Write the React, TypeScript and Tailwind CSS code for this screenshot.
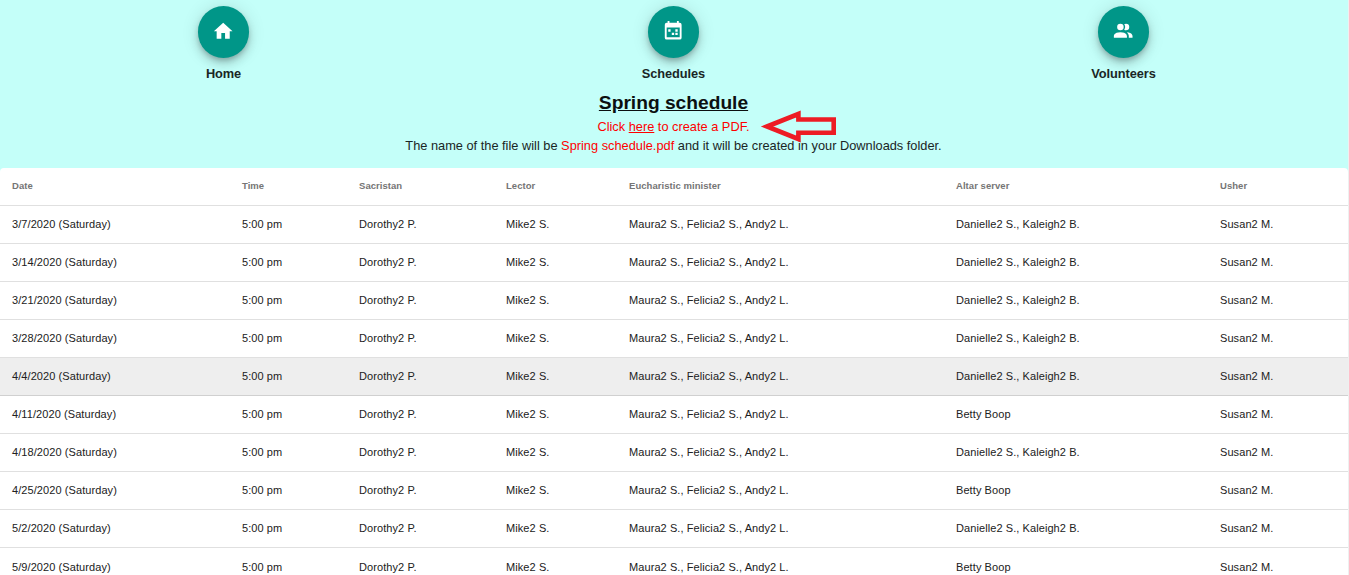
import type { ReactNode } from "react";

const altar = "Danielle2 S., Kaleigh2 B.";
const betty = "Betty Boop";
const rows = [
  ["3/7/2020", altar],
  ["3/14/2020", altar],
  ["3/21/2020", altar],
  ["3/28/2020", altar],
  ["4/4/2020", altar],
  ["4/11/2020", betty],
  ["4/18/2020", altar],
  ["4/25/2020", betty],
  ["5/2/2020", altar],
  ["5/9/2020", betty],
];
const headings = ["Date", "Time", "Sacristan", "Lector", "Eucharistic minister", "Altar server", "Usher"];

function Icon({ d }: { d: string }) {
  return (
    <svg viewBox="0 0 24 24" className="-mt-px size-[22.4px]" fill="currentColor">
      <path fillRule="evenodd" d={d} />
    </svg>
  );
}

const homePath = "M10 20v-6h4v6h5v-8h3L12 3 2 12h3v8z";
const calendarPath =
  "M19 3A2 2 0 0 1 21 5V19A2 2 0 0 1 19 21H5A2 2 0 0 1 3 19V5A2 2 0 0 1 5 3H6V1H8V3H16V1H18V3zM5 8V18.500H19V8zM6.700 10H9.200V12.500H6.700zM14.300 10H16.800V12.500H14.300zM10.500 13.700H13V16.200H10.500zM14.300 13.700H16.800V16.200H14.300z";
const peoplePath =
  "M16 17V19H2V17S2 13 9 13 16 17 16 17M12.500 7.500A3.500 3.500 0 1 0 9 11A3.500 3.500 0 0 0 12.500 7.500M15.940 13A5.320 5.320 0 0 1 18 17V19H22V17S22 13.370 15.940 13M15 4A3.390 3.390 0 0 0 13.070 4.590A5 5 0 0 1 13.070 10.410A3.390 3.390 0 0 0 15 11A3.500 3.500 0 0 0 15 4Z";

function NavItem({ label, children }: { label: string; children: ReactNode }) {
  return (
    <div className="flex flex-1 flex-col items-center pt-[6.4px]">
      <button className="flex size-[51.2px] items-center justify-center rounded-full bg-[#009688] text-white shadow-[0_3px_5px_-1px_rgba(0,0,0,0.2),0_6px_10px_0_rgba(0,0,0,0.14),0_1px_18px_0_rgba(0,0,0,0.12)]">
        {children}
      </button>
      <span className="mt-1.5 text-[12.8px] leading-[19px] font-bold tracking-[-0.08px] text-[#1a2625]">{label}</span>
    </div>
  );
}

export default function App() {
  return (
    <div className="h-[575px] overflow-hidden border-r border-[#eef0f0] bg-[#c4fff9] font-['Liberation_Sans',Arial,sans-serif] text-[#1a2625]">
      <header className="h-[168px]">
        <nav className="-ml-[1.5px] flex h-[90px] w-[1350px]">
          <NavItem label="Home"><Icon d={homePath} /></NavItem>
          <NavItem label="Schedules"><Icon d={calendarPath} /></NavItem>
          <NavItem label="Volunteers"><Icon d={peoplePath} /></NavItem>
        </nav>
        <div className="relative w-[1347px] text-center text-[12.8px] leading-[19px]">
          <h1 className="h-[27px] text-[19.2px] leading-[25px] font-bold text-[#0c1010] underline">Spring schedule</h1>
          <p className="text-[#ff0000]">Click <a href="#pdf" className="underline">here</a> to create a PDF.</p>
          <p>The name of the file will be <span className="text-[#ff0000]">Spring schedule.pdf</span> and it will be created in your Downloads folder.</p>
          <svg className="absolute top-[20px] left-[760px] h-[34px] w-[78px]" viewBox="0 0 78 34" fill="none">
            <path d="M7 16.500L38.400 4v5.500h35.300v13.200H38.400V29z" stroke="#ed1c24" strokeWidth="4.600" />
          </svg>
        </div>
      </header>
      <table className="w-[1348px] table-fixed border-separate border-spacing-0 rounded-t bg-white text-left">
        <colgroup>
          <col className="w-[230px]" /><col className="w-[117px]" /><col className="w-[147px]" /><col className="w-[123px]" />
          <col className="w-[327px]" /><col className="w-[264px]" /><col className="w-[140px]" />
        </colgroup>
        <thead>
          <tr>
            {headings.map((h) => (
              <th key={h} className="h-[38px] border-b border-[#e0e0e0] py-0 pl-3 text-[9.500px] font-bold tracking-[0.05px] text-[#757575]">{h}</th>
            ))}
          </tr>
        </thead>
        <tbody>
          {rows.map(([date, server]) => (
            <tr key={date} className={date === "4/4/2020" ? "h-[38px] border-[#d0d0d0] bg-[#eeeeee]" : date === "5/9/2020" ? "h-10 border-[#e0e0e0]" : "h-[38px] border-[#e0e0e0]"}>
              {[date + " (Saturday)", "5:00 pm", "Dorothy2 P.", "Mike2 S.", "Maura2 S., Felicia2 S., Andy2 L.", server, "Susan2 M."].map((value) => (
                <td key={value} className="border-b border-inherit py-0 pl-3 text-[11px] tracking-[0.08px] whitespace-nowrap text-[#212121]">{value}</td>
              ))}
            </tr>
          ))}
        </tbody>
      </table>
    </div>
  );
}
